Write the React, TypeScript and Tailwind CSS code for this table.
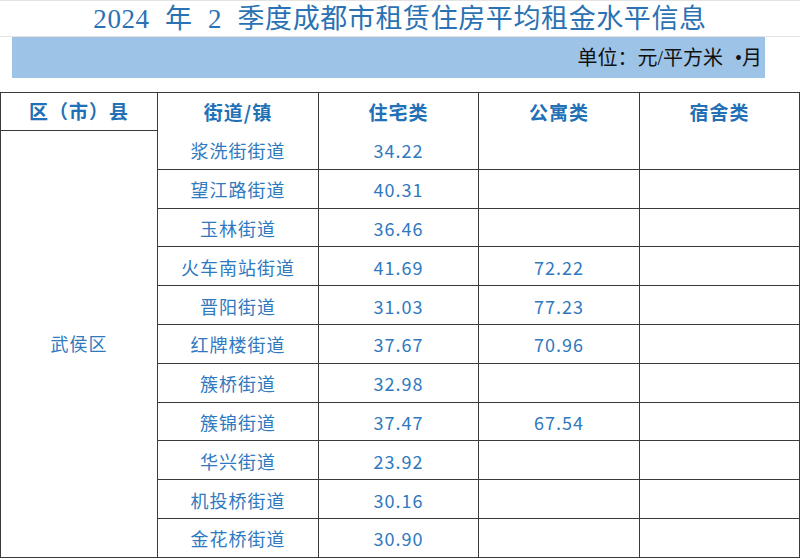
const rows: [string, string, string][] = [
  ["浆洗街街道", "34.22", ""],
  ["望江路街道", "40.31", ""],
  ["玉林街道", "36.46", ""],
  ["火车南站街道", "41.69", "72.22"],
  ["晋阳街道", "31.03", "77.23"],
  ["红牌楼街道", "37.67", "70.96"],
  ["簇桥街道", "32.98", ""],
  ["簇锦街道", "37.47", "67.54"],
  ["华兴街道", "23.92", ""],
  ["机投桥街道", "30.16", ""],
  ["金花桥街道", "30.90", ""],
];

const cell = "border-r border-b border-[#3a3a3a] text-center align-middle p-0";

export default function App() {
  return (
    <div className="h-[559px] w-[800px] overflow-hidden bg-white">
      {/* title */}
      <div className="flex h-[37px] items-center justify-center border-t border-b border-[#e3e3e3] pt-[2px] font-['Liberation_Serif','Noto_Sans_CJK_SC',serif] text-[27px] leading-none tracking-[0.6px] text-[#2a72b3] [word-spacing:8px]">
        2024 年 2 季度成都市租赁住房平均租金水平信息
      </div>

      <div className="ml-[12px] flex h-[41px] w-[753px] items-center justify-end bg-[#9dc3e6] pr-[3px] font-['Liberation_Serif','Noto_Sans_CJK_SC',serif] text-[20px] text-[#111] [word-spacing:7px]">
        单位：元/平方米 •月
      </div>

      <div className="h-[14px]" />

      <table className="w-[800px] table-fixed border-collapse border-t border-l border-[#3a3a3a] font-['Noto_Sans_CJK_SC',sans-serif] text-[#2f79bf]">
        <colgroup>
          <col className="w-[157px]" />
          <col className="w-[161px]" />
          <col className="w-[160px]" />
          <col className="w-[161px]" />
          <col className="w-[160px]" />
        </colgroup>
        <thead>
          <tr className="h-[38px] text-[19px] font-bold tracking-[1px] text-[#2270b5]">
            <th className={cell}>区（市）县</th>
            <th className="border-r border-[#3a3a3a] p-0 text-center">街道/镇</th>
            <th className="border-r border-[#3a3a3a] p-0 text-center">住宅类</th>
            <th className="border-r border-[#3a3a3a] p-0 text-center">公寓类</th>
            <th className="border-r border-[#3a3a3a] p-0 text-center">宿舍类</th>
          </tr>
        </thead>
        <tbody className="text-[18px] tracking-[1px]">
          {rows.map(([street, home, apt], i) => (
            <tr key={street} className="h-[38.8px]">
              {i === 0 && (
                <td rowSpan={rows.length} className={cell}>
                  武侯区
                </td>
              )}
              <td className={`${cell} pt-[2px]`}>{street}</td>
              <td className={`${cell} pt-[2px]`}>{home}</td>
              <td className={`${cell} pt-[2px]`}>{apt}</td>
              <td className={cell}></td>
            </tr>
          ))}
        </tbody>
      </table>
    </div>
  );
}
